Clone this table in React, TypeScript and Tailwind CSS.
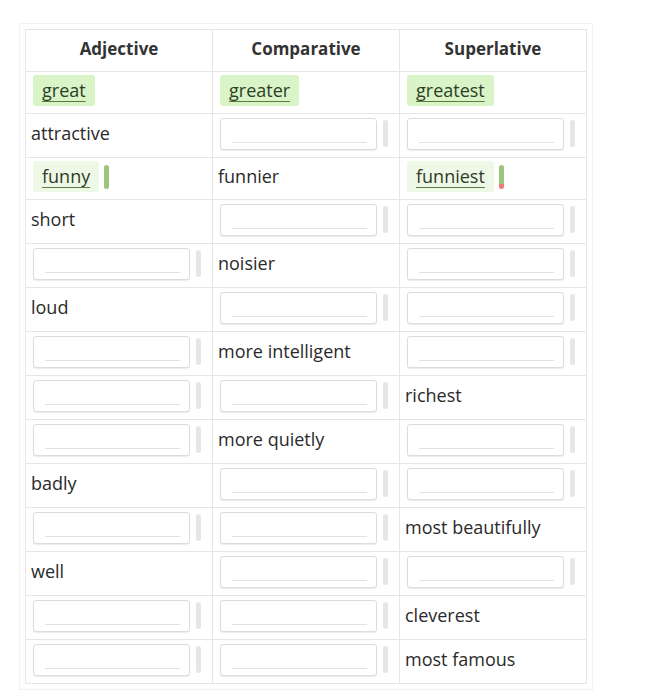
type Cell =
  | { kind: "text"; value: string }
  | { kind: "input" }
  | { kind: "chip"; value: string; handle?: "green" | "mixed"; solid?: boolean };

const t = (value: string): Cell => ({ kind: "text", value });
const inp: Cell = { kind: "input" };

const ROWS: Cell[][] = [
  [
    { kind: "chip", value: "great", solid: true },
    { kind: "chip", value: "greater", solid: true },
    { kind: "chip", value: "greatest", solid: true },
  ],
  [t("attractive"), inp, inp],
  [
    { kind: "chip", value: "funny", handle: "green" },
    t("funnier"),
    { kind: "chip", value: "funniest", handle: "mixed" },
  ],
  [t("short"), inp, inp],
  [inp, t("noisier"), inp],
  [t("loud"), inp, inp],
  [inp, t("more intelligent"), inp],
  [inp, inp, t("richest")],
  [inp, t("more quietly"), inp],
  [t("badly"), inp, inp],
  [inp, inp, t("most beautifully")],
  [t("well"), inp, inp],
  [inp, inp, t("cleverest")],
  [inp, inp, t("most famous")],
];

const InputBox = () => (
  <div className="flex items-center gap-[6px] pl-[2px]">
    <div className="relative h-[32px] w-[157px] rounded-[3px] border border-[#dcdcdc] bg-white shadow-[0_1px_1px_rgba(0,0,0,0.08)]">
      <div className="absolute left-[11px] right-[9px] top-[23px] h-px bg-[#e2e2e2]" />
    </div>
    <div className="h-[27px] w-[5px] rounded-full bg-[#e6e6e6]" />
  </div>
);

const Chip = ({ cell }: { cell: Extract<Cell, { kind: "chip" }> }) => (
  <div className="flex items-center gap-[5px] pl-[2px]">
    <div
      className={
        cell.solid
          ? "flex h-[31px] items-center rounded-[3px] bg-[#d9f4c7] px-[9px]"
          : "flex h-[31px] items-center rounded-[3px] bg-[#eef8e6] px-[9px]"
      }
    >
      <span className="text-[#2f3d26] underline decoration-[#5b7a3e] underline-offset-[4px]">{cell.value}</span>
    </div>
    {cell.handle === "green" && <div className="h-[24px] w-[5px] rounded-full bg-[#9cc47a]" />}
    {cell.handle === "mixed" && (
      <div className="flex h-[24px] w-[5px] flex-col overflow-hidden rounded-full">
        <div className="flex-1 bg-[#9cc47a]" />
        <div className="h-[5px] bg-[#f07a7a]" />
      </div>
    )}
  </div>
);

export default function App() {
  return (
    <div className="min-h-screen bg-white p-[19px] pt-[23px] font-['Open_Sans',sans-serif] text-[18px] text-[#2a2a2a]">
      <div className="w-[574px] border border-[#f2f2f2] px-[5px] py-[5px]">
        <table className="w-[562px] table-fixed border-collapse border border-[#e6e6e6]">
          <thead>
            <tr className="h-[42px]">
              {["Adjective", "Comparative", "Superlative"].map((h) => (
                <th key={h} className="border border-[#e6e6e6] pb-[4px] text-center text-[17px] font-bold text-[#333]">
                  {h}
                </th>
              ))}
            </tr>
          </thead>
          <tbody>
            {ROWS.map((row, i) => {
              const hasInput = row.some((c) => c.kind === "input");
              return (
                <tr key={i} className={hasInput ? "h-[44px]" : "h-[42px]"}>
                  {row.map((cell, j) => (
                    <td key={j} className="border border-[#e6e6e6] pl-[5px] pr-[6px] pt-0 pb-[4px] align-middle">
                      {cell.kind === "text" && <span className="whitespace-nowrap">{cell.value}</span>}
                      {cell.kind === "input" && <InputBox />}
                      {cell.kind === "chip" && <Chip cell={cell} />}
                    </td>
                  ))}
                </tr>
              );
            })}
          </tbody>
        </table>
      </div>
    </div>
  );
}
